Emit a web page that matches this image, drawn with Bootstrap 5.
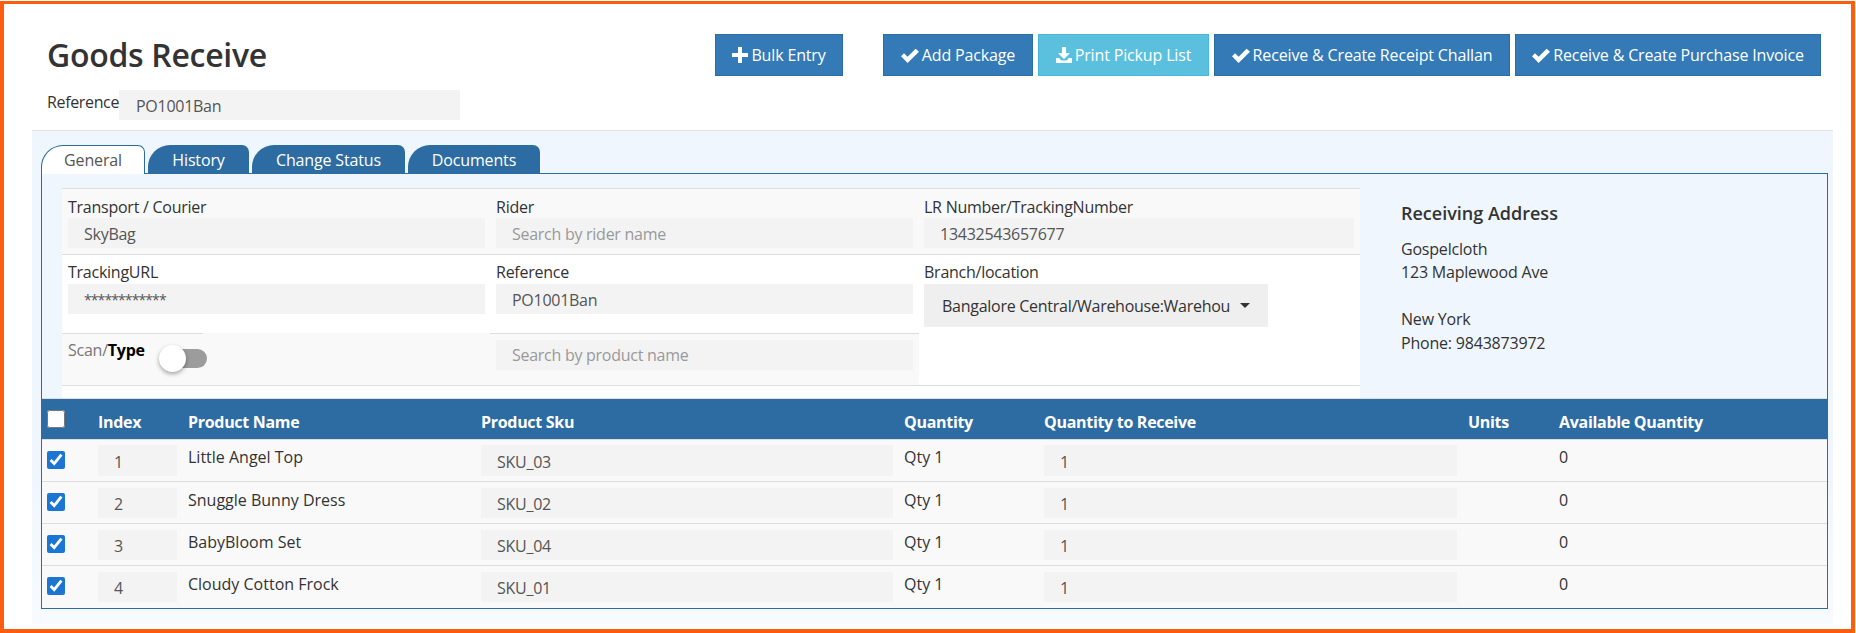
<!DOCTYPE html>
<html lang="en">
<head>
<meta charset="utf-8">
<title>Goods Receive</title>
<link rel="stylesheet" href="https://cdn.jsdelivr.net/npm/bootstrap@5.3.0/dist/css/bootstrap.min.css">
<script src="https://cdn.jsdelivr.net/npm/bootstrap@5.3.0/dist/js/bootstrap.bundle.min.js"></script>
<style>
html,body{background:#fff;overflow:hidden}
body{font-family:"Open Sans","Noto Sans",sans-serif;font-size:16px;letter-spacing:-.25px;color:#333;line-height:21px}
.frame{margin:1px 1px 0 0;height:632px;border:solid #ff5c0f;border-width:3px 4px 4px 4px;padding-left:28px;padding-right:18px;overflow:hidden;box-sizing:border-box}
.head-bar{height:126px;padding:30px 12px 0 15px}
.page-title{font-size:32px;line-height:42px;font-weight:600;letter-spacing:-.3px;margin:0;color:#333}
.ref-line{margin-top:14px}
.ref-line label{width:72px;flex:none;line-height:22px;margin-top:1px;white-space:nowrap;letter-spacing:-.35px}
.fld{background:#f3f3f3;border:0;border-radius:0;height:30px;padding:2px 0 0 16px;font-size:16px;letter-spacing:-.27px;color:#555;line-height:21px;box-shadow:none}
.fld:focus{background:#f3f3f3;box-shadow:none}
.fld::placeholder{color:#999;opacity:1}
.ref-fld{width:341px;padding-left:17px;flex:none}
.mask-fld{font-size:14px;letter-spacing:-.9px;padding-top:0}
.act{height:42px;border-radius:0;padding:0;font-size:16px;letter-spacing:-.15px;color:#fff;background:#337ab7;border:1px solid #2e6da4;display:flex;align-items:center;justify-content:center;gap:3px;white-space:nowrap}
.act.inf{background:#5bc0de;border-color:#46b8da}
.act svg{flex:none}
.w-bulk{width:128px;margin-right:40px}
.w-add{width:150px}
.w-print{width:171px}
.w-chal{width:296px}
.w-inv{width:306px}
.act-set{gap:5px}
.panel-wrap{height:494px;background:linear-gradient(#eff6fd 0,#eff6fd 70%,#f7fbff 100%);border-top:1px solid #e3e3e3;padding:14px 5px 0 9px}
.tab-strip{border:0;height:28px;gap:3px;flex-wrap:nowrap}
.tab-strip .nav-link{height:29px;padding:5px 0 0;text-align:center;background:#2d6ca2;color:#fff;border:0;border-radius:22px 7px 0 0;font-size:16px;letter-spacing:-.15px;margin:0;line-height:21px}
.tab-strip .nav-link.active{background:#fff;color:#555;border:1px solid #2d6ca2;border-bottom:0;padding-top:4px;position:relative;z-index:2}
.t-gen{width:104px}.t-his{width:101px}.t-chg{width:153px}.t-doc{width:132px}
.tab-box{border:1px solid #2d6ca2;height:436px}
.upper{height:224px;padding-top:14px}
.form-area{margin-left:20px;width:1298px;flex:none;background:#fff}
.line-a,.line-b,.line-c{display:flex;border-top:1px solid #ddd}
.line-a{height:66px;background:#f9f9f9}
.line-b{height:79px;background:#fff}
.line-c{height:53px;border-top:0;border-bottom:1px solid #ddd;background:linear-gradient(90deg,#f9f9f9 0,#f9f9f9 857px,#fff 857px)}
.cell{width:428px;padding:7px 5px 0 6px;flex:none}
.line-b .cell{padding-top:6px}
.line-b .cell label{height:23px}
.cell-w{width:442px;padding-right:6px}
.cell label{display:block;margin:0;line-height:22px;color:#333;white-space:nowrap}
.cell .fld{width:100%;display:block}
.scan-cell{width:141px;border-top:1px solid #ddd;padding:6px 0 0 6px;display:flex;flex:none;margin-right:287px;overflow:visible}
.scan-lbl{color:#777;width:100px;flex:none;white-space:nowrap}
.scan-lbl b{color:#000;font-weight:700}
.sw-track{display:block;flex:none;position:relative;width:39px;height:19px;background:#9c9c9c;border-radius:10px;margin:9px 0 0 0}
.sw-track::after{content:"";position:absolute;left:-9px;top:-4px;width:27px;height:27px;border-radius:50%;background:#fff;box-shadow:0 2px 4px rgba(0,0,0,.35)}
.search-cell{width:429px;border-top:1px solid #ddd;padding:6px 6px 0 6px;flex:none}
.search-cell .fld{width:417px;padding-top:0}
.loc-btn{width:344px;height:43px;background:#efefef;border:0;border-radius:0;padding:0 18px 0 18px;display:flex;align-items:center;font-size:16px;letter-spacing:-.27px;color:#333;text-align:left}
.loc-btn:hover{background:#efefef;color:#333}
.loc-btn span{display:block;width:286px;white-space:nowrap;flex:none}
.loc-btn::after{margin-left:auto;border-top-width:5px;border-left-width:5px;border-right-width:5px;border-bottom:0;flex:none;margin-right:0}
.addr{padding:14px 0 0 41px;line-height:23.4px;letter-spacing:-.2px}
.addr h6{font-size:18px;line-height:22px;font-weight:600;margin:0 0 14px;color:#333;letter-spacing:0}
.goods{table-layout:fixed;width:1785px;margin:0;border-collapse:separate;border-spacing:0;--bs-table-bg:transparent}
.goods th{background:#2d6ca2;color:#fff;height:42px;padding:6px 0 0 6px;vertical-align:middle;font-weight:700;border-top:1px solid #ddd;border-bottom:1px solid #ddd;letter-spacing:-.3px}
.goods td{background:#f9f9f9;padding:6px 5px 5px 6px;border-bottom:1px solid #ddd;vertical-align:top;color:#333;box-shadow:none;letter-spacing:0}
.goods tr:last-child td{border-bottom:0;padding-bottom:6px}
.goods td .fld{width:100%;display:block}
.goods tr:first-child td{padding-top:5px}
.goods tr:first-child td .fld{height:31px}
.goods tr td.chk,.goods tr:first-child td.chk,.goods tr:last-child td.chk{vertical-align:middle;padding:0 0 2px 5px}
.goods th.chk{padding:0 0 0 5px}
.goods td.txt{padding-top:8px}
.goods tr:first-child td.txt{padding-top:7px}
.tick{width:18px;height:18px;margin:0;display:block;accent-color:#1a76d2}
</style>
</head>
<body>
<div class="frame">
  <div class="head-bar d-flex justify-content-between">
    <div>
      <h1 class="page-title">Goods Receive</h1>
      <div class="ref-line d-flex">
        <label>Reference</label>
        <input class="form-control fld ref-fld" value="PO1001Ban">
      </div>
    </div>
    <div class="d-flex">
      <button class="btn act w-bulk"><svg width="16" height="16" viewBox="0 0 16 16"><path fill="#fff" d="M6 0h4v6h6v4h-6v6H6v-6H0V6h6z"/></svg>Bulk Entry</button>
      <div class="d-flex act-set">
        <button class="btn act w-add"><svg width="18" height="15" viewBox="0 0 18 15"><path fill="#fff" d="M0 8.2 3 5.2l3.6 3.6L14.6.8 18 3.8 6.6 15z"/></svg>Add Package</button>
        <button class="btn act inf w-print"><svg width="16" height="16" viewBox="0 0 16 16"><path fill="#fff" d="M6 0h4v6h4l-6 6-6-6h4zM0 11h3.2l2 2.4h5.6l2-2.4H16v5H0z"/></svg>Print Pickup List</button>
        <button class="btn act w-chal"><svg width="18" height="15" viewBox="0 0 18 15"><path fill="#fff" d="M0 8.2 3 5.2l3.6 3.6L14.6.8 18 3.8 6.6 15z"/></svg>Receive &amp; Create Receipt Challan</button>
        <button class="btn act w-inv"><svg width="18" height="15" viewBox="0 0 18 15"><path fill="#fff" d="M0 8.2 3 5.2l3.6 3.6L14.6.8 18 3.8 6.6 15z"/></svg>Receive &amp; Create Purchase Invoice</button>
      </div>
    </div>
  </div>
  <div class="panel-wrap">
    <ul class="nav nav-tabs tab-strip">
      <li class="nav-item"><a class="nav-link active t-gen" href="#">General</a></li>
      <li class="nav-item"><a class="nav-link t-his" href="#">History</a></li>
      <li class="nav-item"><a class="nav-link t-chg" href="#">Change Status</a></li>
      <li class="nav-item"><a class="nav-link t-doc" href="#">Documents</a></li>
    </ul>
    <div class="tab-box">
      <div class="upper d-flex">
        <div class="form-area">
          <div class="line-a">
            <div class="cell"><label>Transport / Courier</label><input class="form-control fld" value="SkyBag"></div>
            <div class="cell"><label>Rider</label><input class="form-control fld" placeholder="Search by rider name"></div>
            <div class="cell cell-w"><label>LR Number/TrackingNumber</label><input class="form-control fld" value="13432543657677"></div>
          </div>
          <div class="line-b">
            <div class="cell"><label>TrackingURL</label><input class="form-control fld mask-fld" type="text" value="************"></div>
            <div class="cell"><label>Reference</label><input class="form-control fld" value="PO1001Ban"></div>
            <div class="cell cell-w"><label>Branch/location</label><button class="btn dropdown-toggle loc-btn"><span>Bangalore Central/Warehouse:Warehou</span></button></div>
          </div>
          <div class="line-c">
            <div class="scan-cell"><div class="scan-lbl">Scan/<b>Type</b></div><span class="sw-track"></span></div>
            <div class="search-cell"><input class="form-control fld" placeholder="Search by product name"></div>
          </div>
        </div>
        <div class="addr">
          <h6>Receiving Address</h6>
          <div>Gospelcloth</div>
          <div>123 Maplewood Ave</div>
          <div>&nbsp;</div>
          <div>New York</div>
          <div>Phone: 9843873972</div>
        </div>
      </div>
      <table class="table goods">
        <colgroup><col style="width:50px"><col style="width:90px"><col style="width:293px"><col style="width:423px"><col style="width:140px"><col style="width:424px"><col style="width:91px"><col style="width:274px"></colgroup>
        <thead>
          <tr><th class="chk"><input type="checkbox" class="tick"></th><th>Index</th><th>Product Name</th><th>Product Sku</th><th>Quantity</th><th>Quantity to Receive</th><th>Units</th><th>Available Quantity</th></tr>
        </thead>
        <tbody>
          <tr><td class="chk"><input type="checkbox" class="tick" checked></td><td><input class="form-control fld" value="1"></td><td class="txt">Little Angel Top</td><td><input class="form-control fld" value="SKU_03"></td><td class="txt">Qty 1</td><td><input class="form-control fld" value="1"></td><td></td><td class="txt">0</td></tr>
          <tr><td class="chk"><input type="checkbox" class="tick" checked></td><td><input class="form-control fld" value="2"></td><td class="txt">Snuggle Bunny Dress</td><td><input class="form-control fld" value="SKU_02"></td><td class="txt">Qty 1</td><td><input class="form-control fld" value="1"></td><td></td><td class="txt">0</td></tr>
          <tr><td class="chk"><input type="checkbox" class="tick" checked></td><td><input class="form-control fld" value="3"></td><td class="txt">BabyBloom Set</td><td><input class="form-control fld" value="SKU_04"></td><td class="txt">Qty 1</td><td><input class="form-control fld" value="1"></td><td></td><td class="txt">0</td></tr>
          <tr><td class="chk"><input type="checkbox" class="tick" checked></td><td><input class="form-control fld" value="4"></td><td class="txt">Cloudy Cotton Frock</td><td><input class="form-control fld" value="SKU_01"></td><td class="txt">Qty 1</td><td><input class="form-control fld" value="1"></td><td></td><td class="txt">0</td></tr>
        </tbody>
      </table>
    </div>
  </div>
</div>
</body>
</html>
